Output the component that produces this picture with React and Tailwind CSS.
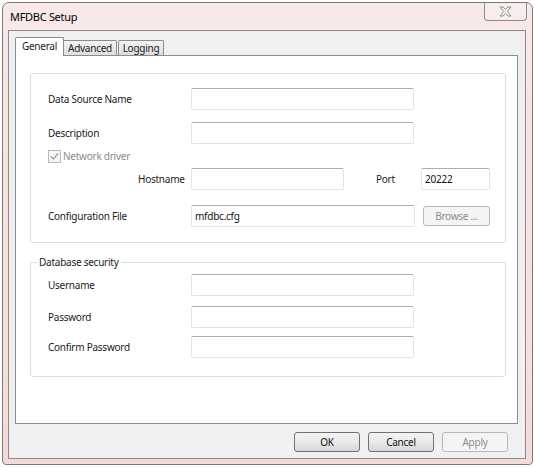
import React from 'react';
import clsx from 'clsx';

function TextBox({ className, value }) {
  return (
    <div
      className={clsx(
        'h-[22px] rounded-[2px] border border-[#dfe3ea] border-t-[#abadb3] bg-white flex items-center pl-[3px] text-[#111]',
        className
      )}
    >
      {value}
    </div>
  );
}

function Button({ children, disabled, className }) {
  return (
    <div
      className={clsx(
        'h-[20px] rounded-[3px] border flex items-center justify-center',
        disabled
          ? 'border-[#b5b9bc] bg-[#f4f4f4] text-[#8c8c8c]'
          : 'border-[#707070] bg-gradient-to-b from-[#f2f2f2] via-[#ebebeb] to-[#d6d6d6] text-[#111]',
        className
      )}
    >
      {children}
    </div>
  );
}

function Row({ label, className, children }) {
  return (
    <div className={clsx('flex items-center', className)}>
      <span className="w-[143px] shrink-0">{label}</span>
      {children}
    </div>
  );
}

export default function App() {
  return (
    <div className="w-[535px] h-[467px] bg-white pl-[2px] pt-[2px] font-['Noto_Sans',sans-serif] text-[10px] tracking-[-0.25px] text-[#1a1a1a]">
      <div className="w-[531px] h-[463px] rounded-t-[7px] rounded-b-[4px] border border-[#7d7877] bg-gradient-to-b from-[#f6e9e7] to-[#f2dcd8] flex flex-col">
        {/* Title bar */}
        <div className="h-[27px] shrink-0 flex items-start justify-between">
          <span className="ml-[7px] mt-[6px] text-[11px] tracking-[-0.3px] text-black">MFDBC Setup</span>
          <div className="mr-[5px] w-[43px] h-[18px] rounded-b-[4px] border border-t-0 border-[#948a88] bg-[#f7eeec] flex items-center justify-center">
            <svg width="13" height="11" viewBox="0 0 13 11">
              <polygon
                points="1,1 4,1 6.5,3.6 9,1 12,1 8.2,5.5 12,10 9,10 6.5,7.4 4,10 1,10 4.8,5.5"
                fill="#fbfbfb"
                stroke="#8a8a8a"
                strokeWidth="1"
                strokeLinejoin="round"
              />
            </svg>
          </div>
        </div>

        {/* Client area */}
        <div className="ml-[5px] mr-[6px] mb-[5px] flex-1 border border-[#8e8a8a] bg-[#f0f0f0] flex flex-col">
          {/* Tabs */}
          <div className="h-[24px] pl-[6px] flex items-end">
            <div className="h-[19px] w-[49px] -mb-[1px] relative bg-white border border-b-0 border-[#898c95] rounded-t-[2px] flex items-center justify-center pb-[2px]">
              General
            </div>
            <div className="h-[15px] w-[53px] border border-l-0 border-b-0 border-[#898c95] rounded-tr-[2px] bg-gradient-to-b from-[#f3f3f3] to-[#dedede] flex items-center justify-center">
              Advanced
            </div>
            <div className="h-[15px] w-[46px] ml-[1px] border border-b-0 border-[#898c95] rounded-t-[2px] bg-gradient-to-b from-[#f3f3f3] to-[#dedede] flex items-center justify-center">
              Logging
            </div>
          </div>

          {/* Tab panel */}
          <div className="ml-[6px] w-[503px] h-[369px] border border-[#898c95] bg-white">
            {/* Connection group */}
            <div className="ml-[14px] mt-[17px] w-[476px] h-[170px] rounded-[3px] border border-[#d5dfe5] pl-[17px]">
              <Row label="Data Source Name" className="mt-[14px]">
                <TextBox className="w-[223px]" />
              </Row>
              <Row label="Description" className="mt-[12px]">
                <TextBox className="w-[223px]" />
              </Row>
              <div className="mt-[6px] h-[13px] flex items-center">
                <div className="w-[13px] h-[13px] border border-[#b8b8b8] bg-[#f4f4f4] flex items-center justify-center">
                  <svg width="9" height="9" viewBox="0 0 9 9">
                    <path d="M1 4.5 L3.5 7 L8 1.5" fill="none" stroke="#a3a3a3" strokeWidth="1.4" />
                  </svg>
                </div>
                <span className="ml-[2px] text-[#8a8a8a]">Network driver</span>
              </div>
              <div className="mt-[5px] flex items-center">
                <span className="w-[143px] shrink-0 pl-[90px]">Hostname</span>
                <TextBox className="w-[153px] h-[21px]" />
                <span className="ml-[32px] w-[45px] shrink-0">Port</span>
                <TextBox className="w-[69px] h-[21px]" value="20222" />
              </div>
              <Row label="Configuration File" className="mt-[15px]">
                <TextBox className="w-[224px]" value="mfdbc.cfg" />
                <Button disabled className="ml-[8px] w-[67px]">Browse ...</Button>
              </Row>
            </div>

            {/* Database security group */}
            <div className="ml-[14px] mt-[19px] w-[476px] h-[115px] rounded-[3px] border border-[#d5dfe5] pl-[17px]">
              <span className="-ml-[11px] -mt-[8px] block w-fit bg-white px-[2px] leading-[14px]">
                Database security
              </span>
              <Row label="Username" className="mt-[5px]">
                <TextBox className="w-[223px] h-[21px]" />
              </Row>
              <Row label="Password" className="mt-[10px]">
                <TextBox className="w-[223px] h-[21px]" />
              </Row>
              <Row label="Confirm Password" className="mt-[8px]">
                <TextBox className="w-[223px]" />
              </Row>
            </div>
          </div>

          {/* Dialog buttons */}
          <div className="mt-[8px] pr-[17px] flex justify-end gap-[8px]">
            <Button className="w-[66px]">OK</Button>
            <Button className="w-[66px]">Cancel</Button>
            <Button disabled className="w-[66px]">Apply</Button>
          </div>
        </div>
      </div>
    </div>
  );
}
